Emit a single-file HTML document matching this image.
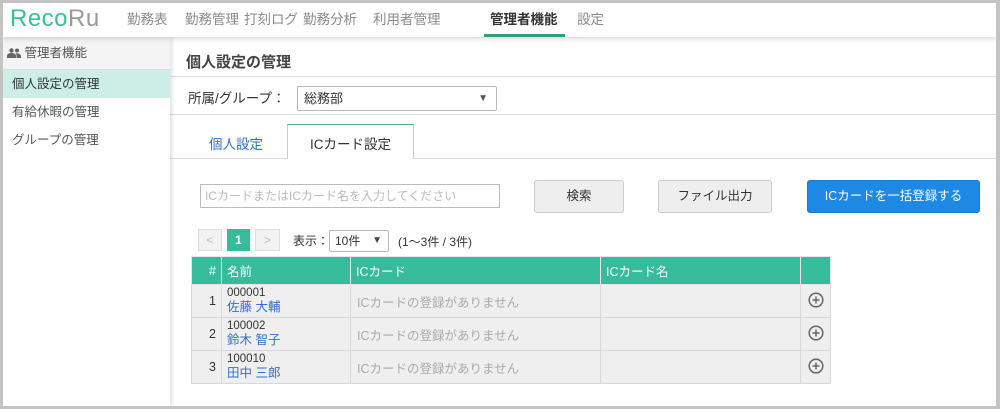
<!DOCTYPE html>
<html><head><meta charset="utf-8"><style>
*{box-sizing:border-box;margin:0;padding:0}
body{width:1000px;height:409px;background:#c4c4c4;font-family:"Liberation Sans","Noto Sans CJK JP",sans-serif;font-size:13px;color:#333;position:relative;overflow:hidden}
.frame{position:absolute;left:3px;top:3px;width:993px;height:403px;background:#fff;overflow:hidden}
.hdr{position:absolute;left:0;top:0;width:993px;height:34px;background:#fff;box-shadow:0 2px 5px rgba(0,0,0,.15);z-index:3}
.logo{position:absolute;left:7px;top:2px;font-size:24px;color:#3dbd9b;letter-spacing:0.5px;line-height:28px}
.logo span{color:#999}
.nav{position:absolute;top:8px;font-size:13.5px;color:#8a8a8a;line-height:18px}
.nav.act{color:#333;font-weight:bold}
.ul{position:absolute;left:481px;top:31px;width:81px;height:3px;background:#2f9e80}
.side{position:absolute;left:0;top:34px;width:167px;height:370px;background:#fff;box-shadow:2px 0 4px rgba(0,0,0,.12);z-index:2}
.sh{height:33px;background:#f4f4f4;border-bottom:1px solid #ddd;padding:0 0 0 4px;line-height:33px;font-size:12.5px;color:#555}
.si{height:28px;line-height:28px;padding-left:9px;font-size:12.5px;color:#555}
.si.a{background:#cdeee6;color:#333}
.abs{position:absolute}
.line{position:absolute;left:167px;width:830px;height:1px;background:#ddd}
.btn{position:absolute;border:1px solid #ccc;border-radius:3px;background:#eee;text-align:center;font-size:12.5px;color:#333;line-height:31px}
table{position:absolute;left:188px;top:253px;border-collapse:collapse;font-size:12.5px}
td,th{border:1px solid #d8d8d8;height:33px}
th{background:#36bc9b;color:#fff;font-weight:normal;text-align:left;padding-left:5px;height:28px;border-color:#e6e6e6}
td{background:#efefef;vertical-align:middle}
.n{font-size:11.5px;line-height:13px;color:#333}
.nm{color:#2f6fcf;line-height:15px}
.gr{color:#aaa;padding-left:6px}
</style></head><body><div class="frame">
<div class="hdr">
<div class="logo">Reco<span>Ru</span></div>
<span class="nav" style="left:124px">勤務表</span>
<span class="nav" style="left:182px">勤務管理</span>
<span class="nav" style="left:241px">打刻ログ</span>
<span class="nav" style="left:300px">勤務分析</span>
<span class="nav" style="left:370px">利用者管理</span>
<span class="nav act" style="left:487px">管理者機能</span>
<span class="nav" style="left:574px">設定</span>
<div class="ul"></div>
</div>
<div class="side">
<div class="sh"><svg width="14" height="10" viewBox="0 0 14 10" style="vertical-align:-1px"><circle cx="4.5" cy="2.5" r="2.2" fill="#666"/><circle cx="10" cy="2.5" r="2" fill="#666"/><path d="M0 10v-2c0-2 2-3 4.5-3s4.5 1 4.5 3v2z M9.5 10v-2c0-1-.4-2-1-2.6 2.5-.3 5.5.4 5.5 2.6v2z" fill="#666"/></svg> 管理者機能</div>
<div class="si a">個人設定の管理</div>
<div class="si">有給休暇の管理</div>
<div class="si">グループの管理</div>
</div>
<div class="abs" style="left:183px;top:50px;font-size:15px;font-weight:bold;color:#444;line-height:20px">個人設定の管理</div>
<div class="line" style="top:73px"></div>
<div class="abs" style="left:185px;top:87px;font-size:13.5px;color:#333;line-height:18px">所属/グループ：</div>
<div class="abs" style="left:294px;top:83px;width:200px;height:25px;border:1px solid #bbb;border-radius:2px;padding-left:6px;line-height:23px;font-size:13px">総務部<span style="position:absolute;right:8px;top:0;font-size:10px;color:#555">▼</span></div>
<div class="line" style="top:111px"></div>
<div class="abs" style="left:206px;top:130px;font-size:13.5px;color:#2f6fcf">個人設定</div>
<div class="abs" style="left:284px;top:121px;width:127px;height:35px;border:1px solid #ccc;border-top:1px solid #5aa890;border-bottom:none;background:#fff;text-align:center;padding-top:8px;font-size:13.5px;z-index:1">ICカード設定</div>
<div class="line" style="top:155px"></div>
<div class="abs" style="left:197px;top:181px;width:300px;height:24px;border:1px solid #bbb;padding-left:4px;line-height:22px;font-size:12px;color:#bbb">ICカードまたはICカード名を入力してください</div>
<div class="btn" style="left:531px;top:177px;width:90px;height:33px">検索</div>
<div class="btn" style="left:655px;top:177px;width:114px;height:33px">ファイル出力</div>
<div class="btn" style="left:804px;top:177px;width:173px;height:33px;background:#1e88e5;border-color:#1e7ad0;color:#fff">ICカードを一括登録する</div>
<div class="abs" style="left:195px;top:226px;width:24px;height:22px;border:1px solid #ddd;background:#f2f2f2;color:#bbb;text-align:center;line-height:20px;font-size:12px">&lt;</div>
<div class="abs" style="left:224px;top:226px;width:23px;height:22px;background:#36bc9b;color:#fff;text-align:center;line-height:22px;font-size:12px;font-weight:bold">1</div>
<div class="abs" style="left:252px;top:226px;width:25px;height:22px;border:1px solid #ddd;background:#f2f2f2;color:#bbb;text-align:center;line-height:20px;font-size:12px">&gt;</div>
<div class="abs" style="left:290px;top:229px;font-size:12px">表示：</div>
<div class="abs" style="left:326px;top:227px;width:60px;height:22px;border:1px solid #bbb;border-radius:2px;padding-left:5px;line-height:20px;font-size:12px">10件<span style="position:absolute;right:6px;top:0;font-size:10px;color:#444">▼</span></div>
<div class="abs" style="left:395px;top:230px;font-size:12px">(1〜3件 / 3件)</div>
<table>
<tr><th style="width:30px;text-align:right;padding-right:5px">#</th><th style="width:129px">名前</th><th style="width:250px">ICカード</th><th style="width:200px">ICカード名</th><th style="width:30px"></th></tr>
<tr><td style="text-align:right;padding-right:5px">1</td><td style="padding-left:5px"><div class="n">000001</div><div class="nm">佐藤 大輔</div></td><td class="gr">ICカードの登録がありません</td><td></td><td style="text-align:center"><svg width="16" height="16" viewBox="0 0 16 16"><circle cx="8" cy="8" r="6.8" fill="none" stroke="#666" stroke-width="1.5"/><path d="M4.5 8h7M8 4.5v7" stroke="#666" stroke-width="1.5"/></svg></td></tr>
<tr><td style="text-align:right;padding-right:5px">2</td><td style="padding-left:5px"><div class="n">100002</div><div class="nm">鈴木 智子</div></td><td class="gr">ICカードの登録がありません</td><td></td><td style="text-align:center"><svg width="16" height="16" viewBox="0 0 16 16"><circle cx="8" cy="8" r="6.8" fill="none" stroke="#666" stroke-width="1.5"/><path d="M4.5 8h7M8 4.5v7" stroke="#666" stroke-width="1.5"/></svg></td></tr>
<tr><td style="text-align:right;padding-right:5px">3</td><td style="padding-left:5px"><div class="n">100010</div><div class="nm">田中 三郎</div></td><td class="gr">ICカードの登録がありません</td><td></td><td style="text-align:center"><svg width="16" height="16" viewBox="0 0 16 16"><circle cx="8" cy="8" r="6.8" fill="none" stroke="#666" stroke-width="1.5"/><path d="M4.5 8h7M8 4.5v7" stroke="#666" stroke-width="1.5"/></svg></td></tr>
</table>
</div></body></html>
